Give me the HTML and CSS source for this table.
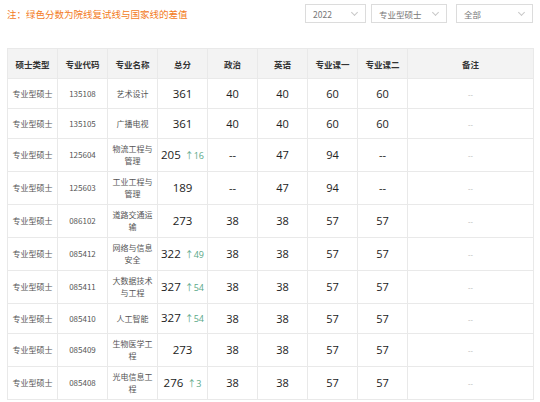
FILE: index.html
```html
<!DOCTYPE html>
<html lang="zh-CN">
<head>
<meta charset="utf-8">
<link rel="stylesheet" href="styles.css">
</head>
<body>
<div class="page">
  <div class="topbar">
    <div class="note">注：绿色分数为院线复试线与国家线的差值</div>
    <div class="filters">
      <div class="select s-year"><span>2022</span><i class="chev"></i></div>
      <div class="select s-type"><span>专业型硕士</span><i class="chev"></i></div>
      <div class="select s-all"><span>全部</span><i class="chev"></i></div>
    </div>
  </div>
  <table class="scores">
    <colgroup>
      <col class="c"><col class="c"><col class="c"><col class="c"><col class="c"><col class="c"><col class="c"><col class="c"><col class="c-last">
    </colgroup>
    <thead>
      <tr><th>硕士类型</th><th>专业代码</th><th>专业名称</th><th>总分</th><th>政治</th><th>英语</th><th>专业课一</th><th>专业课二</th><th>备注</th></tr>
    </thead>
    <tbody>
      <tr><td class="t">专业型硕士</td><td class="t">135108</td><td class="t">艺术设计</td><td class="total">361</td><td class="n">40</td><td class="n">40</td><td class="n">60</td><td class="n">60</td><td class="r">--</td></tr>
      <tr><td class="t">专业型硕士</td><td class="t">135105</td><td class="t">广播电视</td><td class="total">361</td><td class="n">40</td><td class="n">40</td><td class="n">60</td><td class="n">60</td><td class="r">--</td></tr>
      <tr><td class="t">专业型硕士</td><td class="t">125604</td><td class="t">物流工程与管理</td><td class="total">205 <span class="diff">↑16</span></td><td class="n">--</td><td class="n">47</td><td class="n">94</td><td class="n">--</td><td class="r">--</td></tr>
      <tr><td class="t">专业型硕士</td><td class="t">125603</td><td class="t">工业工程与管理</td><td class="total">189</td><td class="n">--</td><td class="n">47</td><td class="n">94</td><td class="n">--</td><td class="r">--</td></tr>
      <tr><td class="t">专业型硕士</td><td class="t">086102</td><td class="t">道路交通运输</td><td class="total">273</td><td class="n">38</td><td class="n">38</td><td class="n">57</td><td class="n">57</td><td class="r">--</td></tr>
      <tr><td class="t">专业型硕士</td><td class="t">085412</td><td class="t">网络与信息安全</td><td class="total">322 <span class="diff">↑49</span></td><td class="n">38</td><td class="n">38</td><td class="n">57</td><td class="n">57</td><td class="r">--</td></tr>
      <tr><td class="t">专业型硕士</td><td class="t">085411</td><td class="t">大数据技术与工程</td><td class="total">327 <span class="diff">↑54</span></td><td class="n">38</td><td class="n">38</td><td class="n">57</td><td class="n">57</td><td class="r">--</td></tr>
      <tr><td class="t">专业型硕士</td><td class="t">085410</td><td class="t">人工智能</td><td class="total">327 <span class="diff">↑54</span></td><td class="n">38</td><td class="n">38</td><td class="n">57</td><td class="n">57</td><td class="r">--</td></tr>
      <tr><td class="t">专业型硕士</td><td class="t">085409</td><td class="t">生物医学工程</td><td class="total">273</td><td class="n">38</td><td class="n">38</td><td class="n">57</td><td class="n">57</td><td class="r">--</td></tr>
      <tr><td class="t">专业型硕士</td><td class="t">085408</td><td class="t">光电信息工程</td><td class="total">276 <span class="diff">↑3</span></td><td class="n">38</td><td class="n">38</td><td class="n">57</td><td class="n">57</td><td class="r">--</td></tr>
    </tbody>
  </table>
</div>
</body>
</html>
```

FILE: styles.css
```css
html, body {
  margin: 0;
  padding: 0;
  background: #fff;
}
body {
  font-family: "Open Sans", "Noto Sans CJK SC", sans-serif;
  color: #333;
}
.page {
  padding: 4px 7px 0 7px;
}
.topbar {
  display: flex;
  justify-content: space-between;
  align-items: center;
  height: 19px;
  margin-bottom: 25px;
}
.note {
  color: #f37b1d;
  font-size: 9.5px;
  line-height: 12px;
  font-family: "Noto Sans CJK SC", sans-serif;
}
.filters {
  display: flex;
  align-items: center;
}
.select {
  box-sizing: border-box;
  height: 19px;
  border: 1px solid #dcdcdc;
  background: #fff;
  display: flex;
  align-items: center;
  justify-content: space-between;
  padding: 0 8px 0 7px;
  font-size: 8.5px;
  color: #777;
  font-family: "Noto Sans CJK SC", sans-serif;
}
.s-year { width: 61px; margin-right: 5px; }
.s-type { width: 76px; margin-right: 9px; }
.s-all { width: 77px; }
.chev {
  width: 4px;
  height: 4px;
  border-right: 1px solid #c8c8c8;
  border-bottom: 1px solid #c8c8c8;
  transform: rotate(45deg);
  margin-top: -3px;
}
.scores {
  width: 526px;
  table-layout: fixed;
  border-collapse: collapse;
}
.scores col.c { width: 50px; }
.scores col.c-last { width: 126px; }
.scores th, .scores td {
  border: 1px solid #e9e9e9;
  text-align: center;
  vertical-align: middle;
  padding: 4px 3px;
  line-height: 12px;
}
.scores tr { height: 30px; }
.scores th {
  background: #f3f3f3;
  font-family: "Noto Sans CJK SC", sans-serif;
  font-size: 8.5px;
  font-weight: bold;
  color: #333;
}
.scores td.t {
  font-family: "Noto Sans CJK SC", sans-serif;
  font-size: 8px;
  color: #555;
}
.scores td.total {
  font-size: 11.5px;
  color: #222;
  white-space: nowrap;
}
.scores td.n {
  font-size: 11px;
  color: #222;
}
.diff {
  font-size: 9px;
  color: #5aa887;
  margin-left: 1px;
}
.scores td.r {
  font-size: 7.5px;
  color: #b5b5b5;
}
```
